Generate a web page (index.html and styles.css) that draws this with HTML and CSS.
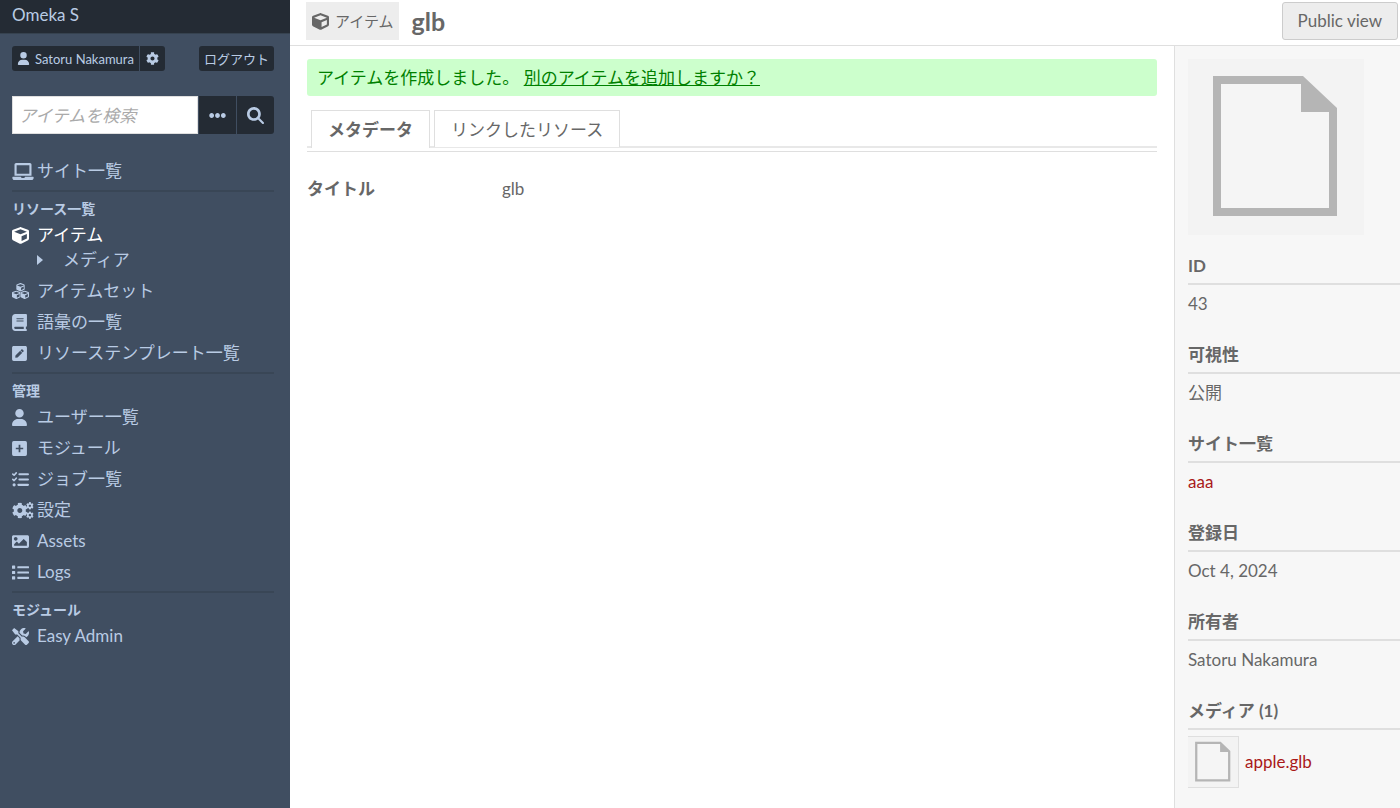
FILE: index.html
```html
<!DOCTYPE html>
<html lang="ja">
<head>
    <meta charset="UTF-8">
    <meta name="viewport" content="width=device-width, initial-scale=1.0">
    <title>glb · アイテム · Omeka S</title>
    <link rel="stylesheet" href="styles.css">
</head>
<body>

<!-- shared icons -->
<svg class="sprite" aria-hidden="true">
    <symbol id="i-user" viewBox="0 0 448 512"><path d="M224 256A128 128 0 1 0 224 0a128 128 0 1 0 0 256zm-45.7 48C79.8 304 0 383.8 0 482.3C0 498.7 13.3 512 29.7 512H418.3c16.4 0 29.7-13.3 29.7-29.7C448 383.8 368.2 304 269.7 304H178.3z"/></symbol>
    <symbol id="i-cog" viewBox="0 0 512 512"><path d="M487.4 315.7l-42.6-24.6c4.3-23.2 4.3-47 0-70.2l42.6-24.6c4.9-2.8 7.1-8.6 5.5-14-11.1-35.6-30-67.8-54.7-94.6-3.8-4.1-10-5.1-14.8-2.3L380.8 110c-17.9-15.4-38.5-27.3-60.8-35.1V25.8c0-5.6-3.9-10.5-9.4-11.7-36.7-8.2-74.3-7.8-109.2 0-5.5 1.2-9.4 6.1-9.4 11.7V75c-22.2 7.9-42.8 19.8-60.8 35.1L88.7 85.5c-4.9-2.8-11-1.9-14.8 2.3-24.7 26.7-43.6 58.9-54.7 94.6-1.7 5.4.6 11.2 5.5 14L67.3 221c-4.3 23.2-4.3 47 0 70.2l-42.6 24.6c-4.9 2.8-7.1 8.6-5.5 14 11.1 35.6 30 67.8 54.7 94.6 3.8 4.1 10 5.1 14.8 2.3l42.6-24.6c17.9 15.4 38.5 27.3 60.8 35.1v49.2c0 5.6 3.9 10.5 9.4 11.7 36.7 8.2 74.3 7.8 109.2 0 5.5-1.2 9.4-6.1 9.4-11.7v-49.2c22.2-7.9 42.8-19.8 60.8-35.1l42.6 24.6c4.9 2.8 11 1.9 14.8-2.3 24.7-26.7 43.6-58.9 54.7-94.6 1.5-5.5-.7-11.3-5.6-14.1zM256 336c-44.1 0-80-35.9-80-80s35.9-80 80-80 80 35.9 80 80-35.9 80-80 80z"/></symbol>
    <symbol id="i-cube" viewBox="0 0 512 512"><path d="M239.1 6.3l-208 78c-18.7 7-31.1 25-31.1 45v225.1c0 18.2 10.3 34.8 26.5 42.9l208 104c13.5 6.8 29.4 6.8 42.9 0l208-104c16.3-8.1 26.5-24.8 26.5-42.9V129.3c0-20-12.4-37.9-31.1-44.9l-208-78C262 2.2 250 2.2 239.1 6.3zM256 68.4l192 72v1.1l-192 78-192-78v-1.1l192-72zm32 356V275.5l160-65v133.9l-160 80z"/></symbol>
    <symbol id="i-page" viewBox="0 0 176 176"><path fill="#f5f5f5" d="M29 21h85l31 31v101H29z"/><path fill="#b5b5b5" fill-rule="evenodd" d="M25 17h90l34 32v108H25zM33 25v124h108V53h-28V25z"/></symbol>
</svg>

<header class="sidebar">
    <div class="site-title"><a href="#">Omeka S</a></div>

    <div class="user">
        <div class="user-links">
            <a href="#"><svg class="icon-user"><use href="#i-user"/></svg>Satoru Nakamura</a>
            <a href="#" aria-label="ユーザー設定"><svg class="icon-cog"><use href="#i-cog"/></svg></a>
        </div>
        <a class="logout" href="#">ログアウト</a>
    </div>

    <form class="search" onsubmit="return false">
        <input type="text" aria-label="アイテムを検索" placeholder="アイテムを検索">
        <button type="button" aria-label="検索オプション"><svg class="icon" viewBox="0 0 512 512"><path d="M328 256c0 39.8-32.2 72-72 72s-72-32.2-72-72 32.2-72 72-72 72 32.2 72 72zm104-72c-39.8 0-72 32.2-72 72s32.2 72 72 72 72-32.2 72-72-32.2-72-72-72zm-352 0c-39.8 0-72 32.2-72 72s32.2 72 72 72 72-32.2 72-72-32.2-72-72-72z"/></svg></button>
        <button type="submit" aria-label="検索"><svg class="icon" viewBox="0 0 512 512"><path d="M416 208c0 45.9-14.9 88.3-40 122.7L502.6 457.4c12.5 12.5 12.5 32.8 0 45.3s-32.8 12.5-45.3 0L330.7 376c-34.4 25.2-76.8 40-122.7 40C93.1 416 0 322.9 0 208S93.1 0 208 0S416 93.1 416 208zM208 336a128 128 0 1 0 0-256 128 128 0 1 0 0 256z"/></svg></button>
    </form>

    <nav>
        <ul>
            <li><a href="#"><svg class="icon wide" viewBox="0 0 640 512"><path d="M624 416H381.54c-.74 19.81-14.71 32-32.74 32H288c-18.69 0-33.02-17.47-32.77-32H16c-8.8 0-16 7.2-16 16v16c0 35.2 28.8 64 64 64h512c35.2 0 64-28.8 64-64v-16c0-8.8-7.2-16-16-16zM576 48c0-26.4-21.6-48-48-48H112C85.6 0 64 21.6 64 48v336h512V48zm-64 272H128V64h384v256z"/></svg>サイト一覧</a></li>
        </ul>

        <h4>リソース一覧</h4>
        <ul>
            <li>
                <a class="active" href="#"><svg class="icon"><use href="#i-cube"/></svg>アイテム</a>
                <ul class="sub">
                    <li><a href="#"><svg class="caret" viewBox="0 0 6 10"><path d="M0 0l6 5-6 5z"/></svg>メディア</a></li>
                </ul>
            </li>
            <li><a href="#"><svg class="icon" viewBox="0 0 512 512"><use href="#i-cube" x="126" y="0" width="260" height="260"/><use href="#i-cube" x="0" y="228" width="260" height="260"/><use href="#i-cube" x="252" y="228" width="260" height="260"/></svg>アイテムセット</a></li>
            <li><a href="#"><svg class="icon narrow" viewBox="0 0 448 512"><path fill-rule="evenodd" d="M96 0C43 0 0 43 0 96V416c0 53 43 96 96 96H416c17.7 0 32-14.3 32-32s-14.3-32-32-32V384c17.7 0 32-14.3 32-32V32c0-17.7-14.3-32-32-32H96zm0 384H352v64H96c-17.7 0-32-14.3-32-32s14.3-32 32-32zm32-240c0-8.8 7.2-16 16-16H336c8.8 0 16 7.2 16 16s-7.2 16-16 16H144c-8.8 0-16-7.2-16-16zm16 48H336c8.8 0 16 7.2 16 16s-7.2 16-16 16H144c-8.8 0-16-7.2-16-16s7.2-16 16-16z"/></svg>語彙の一覧</a></li>
            <li><a href="#"><svg class="icon narrow" viewBox="0 0 448 512"><path d="M400 480H48c-26.5 0-48-21.5-48-48V80c0-26.5 21.5-48 48-48h352c26.5 0 48 21.5 48 48v352c0 26.5-21.5 48-48 48zM238.1 177.9L102.4 313.6l-6.3 57.1c-.8 7.6 5.6 14.1 13.3 13.3l57.1-6.3L302.2 242c2.3-2.3 2.3-6.1 0-8.5L246.7 178c-2.5-2.4-6.3-2.4-8.6-.1zM345 165.1L314.9 135c-9.4-9.4-24.6-9.4-33.9 0l-23.1 23.1c-2.3 2.3-2.3 6.1 0 8.5l55.5 55.5c2.3 2.3 6.1 2.3 8.5 0L345 199c9.3-9.3 9.3-24.5 0-33.9z"/></svg>リソーステンプレート一覧</a></li>
        </ul>

        <h4>管理</h4>
        <ul>
            <li><a href="#"><svg class="icon narrow"><use href="#i-user"/></svg>ユーザー一覧</a></li>
            <li><a href="#"><svg class="icon narrow" viewBox="0 0 448 512"><path fill-rule="evenodd" d="M48 32h352a48 48 0 0 1 48 48v352a48 48 0 0 1-48 48H48a48 48 0 0 1-48-48V80a48 48 0 0 1 48-48zM198 144v86h-86v52h86v86h52v-86h86v-52h-86v-86z"/></svg>モジュール</a></li>
            <li><a href="#"><svg class="icon" viewBox="0 0 512 512"><path fill="none" stroke="currentColor" stroke-width="48" stroke-linecap="round" stroke-linejoin="round" d="M24 92l40 36 64-72M24 252l40 36 64-72"/><path d="M64 368a48 48 0 1 0 0 96 48 48 0 1 0 0-96zM224 64h256a32 32 0 0 1 0 64H224a32 32 0 0 1 0-64zm0 160h256a32 32 0 0 1 0 64H224a32 32 0 0 1 0-64zm-32 160h288a32 32 0 0 1 0 64H192a32 32 0 0 1 0-64z"/></svg>ジョブ一覧</a></li>
            <li><a href="#"><svg class="icon wide" viewBox="0 0 640 512"><use href="#i-cog" x="-16" y="16" width="480" height="480"/><use href="#i-cog" x="412" y="0" width="232" height="232"/><use href="#i-cog" x="412" y="280" width="232" height="232"/></svg>設定</a></li>
            <li><a href="#"><svg class="icon" viewBox="0 0 512 512"><path d="M464 448H48c-26.51 0-48-21.49-48-48V112c0-26.51 21.49-48 48-48h416c26.51 0 48 21.49 48 48v288c0 26.51-21.49 48-48 48zM112 120c-30.928 0-56 25.072-56 56s25.072 56 56 56 56-25.072 56-56-25.072-56-56-56zM64 384h384V272l-87.515-87.515c-4.686-4.686-12.284-4.686-16.971 0L208 320l-55.515-55.515c-4.686-4.686-12.284-4.686-16.971 0L64 336v48z"/></svg>Assets</a></li>
            <li><a href="#"><svg class="icon" viewBox="0 0 512 512"><path d="M80 368H16a16 16 0 0 0-16 16v64a16 16 0 0 0 16 16h64a16 16 0 0 0 16-16v-64a16 16 0 0 0-16-16zm0-320H16A16 16 0 0 0 0 64v64a16 16 0 0 0 16 16h64a16 16 0 0 0 16-16V64a16 16 0 0 0-16-16zm0 160H16a16 16 0 0 0-16 16v64a16 16 0 0 0 16 16h64a16 16 0 0 0 16-16v-64a16 16 0 0 0-16-16zm416 176H176a16 16 0 0 0-16 16v32a16 16 0 0 0 16 16h320a16 16 0 0 0 16-16v-32a16 16 0 0 0-16-16zm0-320H176a16 16 0 0 0-16 16v32a16 16 0 0 0 16 16h320a16 16 0 0 0 16-16V80a16 16 0 0 0-16-16zm0 160H176a16 16 0 0 0-16 16v32a16 16 0 0 0 16 16h320a16 16 0 0 0 16-16v-32a16 16 0 0 0-16-16z"/></svg>Logs</a></li>
        </ul>

        <h4>モジュール</h4>
        <ul>
            <li><a href="#"><svg class="icon" viewBox="0 0 512 512"><path d="M501.1 395.7L384 278.6c-23.1-23.1-57.6-27.6-85.4-13.9L192 158.1V96L64 0 0 64l96 128h62.1l106.6 106.6c-13.6 27.8-9.2 62.3 13.9 85.4l117.1 117.1c14.6 14.6 38.2 14.6 52.7 0l52.7-52.7c14.5-14.6 14.5-38.2 0-52.7zM331.7 225c28.3 0 54.9 11 74.9 31l19.4 19.4c15.8-6.9 30.8-16.5 43.8-29.5 37.1-37.1 49.7-89.3 37.9-136.7-2.2-9-13.5-12.1-20.1-5.5l-74.4 74.4-67.9-11.3L334 98.9l74.4-74.4c6.6-6.6 3.4-17.9-5.7-20.2-47.4-11.7-99.6.9-136.6 37.9-28.5 28.5-41.9 66.1-41.2 103.6l82.1 82.1c8.1-1.9 16.5-2.9 24.7-2.9zm-103.9 82l-56.7-56.7L18.7 402.8c-25 25-25 65.5 0 90.5s65.5 25 90.5 0l123.6-123.6c-7.6-19.9-9.9-41.6-5-62.7zM64 472c-13.2 0-24-10.8-24-24 0-13.3 10.7-24 24-24s24 10.7 24 24c0 13.2-10.7 24-24 24z"/></svg>Easy Admin</a></li>
        </ul>
    </nav>
</header>

<div class="page">
    <div class="page-header">
        <span class="section-label"><svg class="icon"><use href="#i-cube"/></svg>アイテム</span>
        <h1>glb</h1>
        <a class="button" href="#">Public view</a>
    </div>

    <div class="columns">
        <main>
            <div class="success">アイテムを作成しました。 <a href="#">別のアイテムを追加しますか？</a></div>
            <div class="tabs">
                <a class="active" href="#">メタデータ</a>
                <a href="#">リンクしたリソース</a>
            </div>
            <dl class="property">
                <dt>タイトル</dt>
                <dd>glb</dd>
            </dl>
        </main>

        <aside>
            <svg class="thumbnail"><use href="#i-page"/></svg>
            <section>
                <h4>ID</h4>
                <div>43</div>
            </section>
            <section>
                <h4>可視性</h4>
                <div>公開</div>
            </section>
            <section>
                <h4>サイト一覧</h4>
                <div><a href="#">aaa</a></div>
            </section>
            <section>
                <h4>登録日</h4>
                <div>Oct 4, 2024</div>
            </section>
            <section>
                <h4>所有者</h4>
                <div>Satoru Nakamura</div>
            </section>
            <section>
                <h4>メディア (1)</h4>
                <a class="media" href="#"><svg><use href="#i-page"/></svg>apple.glb</a>
            </section>
        </aside>
    </div>
</div>

</body>
</html>
```
FILE: styles.css
```css
* {
    box-sizing: border-box;
}
body {
    margin: 0;
    min-height: 100vh;
    display: flex;
    font-family: Lato, "Noto Sans CJK JP", sans-serif;
    font-size: 17px;
    line-height: 24px;
    color: #676767;
    background: #fff;
}
a {
    color: #a91919;
    text-decoration: none;
}
ul {
    list-style: none;
    margin: 0;
    padding: 0;
}
h1, h4, dl, dd {
    margin: 0;
}
svg {
    display: block;
    flex: none;
    fill: currentColor;
}
.sprite {
    position: absolute;
    width: 0;
    height: 0;
}
.icon {
    width: 17px;
    height: 17px;
}
.icon.narrow {
    width: 15px;
}
.icon.wide {
    width: 22px;
}

/* left sidebar */
.sidebar {
    flex: none;
    width: 290px;
    background: #404e61;
    color: #b9cbe4;
}
.sidebar a {
    color: #b9cbe4;
}
.site-title {
    padding: 3px 12px 6px;
    background: #242b34;
    border-bottom: 1px solid #36424f;
}
.user {
    display: flex;
    justify-content: space-between;
    padding: 12px 16px 0 12px;
    font-size: 13px;
}
.user-links {
    display: flex;
    gap: 1px;
}
.user a {
    display: flex;
    align-items: center;
    height: 25px;
    padding: 0 5px;
    background: #242b34;
    border-radius: 3px;
}
.user-links a:first-child {
    gap: 5px;
    border-radius: 3px 0 0 3px;
}
.user-links a:last-child {
    padding: 0 6px;
    border-radius: 0 3px 3px 0;
}
.icon-user,
.icon-cog {
    width: 13px;
    height: 13px;
}
.search {
    display: flex;
    gap: 1px;
    margin: 25px 16px 25px 12px;
}
.search input {
    flex: 1;
    min-width: 0;
    height: 38px;
    padding: 0 6px;
    border: 1px solid #dfdfdf;
    border-radius: 0;
    background: #fff;
    color: #676767;
    font: inherit;
}
.search input::placeholder {
    color: #aaa;
    font-style: italic;
}
.search button {
    display: flex;
    align-items: center;
    justify-content: center;
    width: 37px;
    height: 38px;
    padding: 0;
    border: 0;
    background: #242b34;
    color: #b9cbe4;
    cursor: pointer;
}
.search button:last-child {
    border-radius: 0 3px 3px 0;
}
nav {
    padding: 0 16px 16px 12px;
}
nav ul a {
    display: flex;
    align-items: center;
    height: 24px;
    margin-bottom: 7px;
}
nav a .icon {
    margin-right: 8px;
}
nav a .narrow {
    margin-right: 10px;
}
nav a .wide {
    margin-right: 3px;
}
.sidebar a.active {
    margin-bottom: 1px;
    color: #fff;
}
nav .sub a {
    padding-left: 25px;
}
.caret {
    width: 6px;
    height: 10px;
    margin-right: 20px;
}
nav h4 {
    padding: 5px 0 2px;
    border-top: 2px solid #394656;
    font-size: 14px;
}

/* page header */
.page {
    flex: 1;
    min-width: 0;
    display: flex;
    flex-direction: column;
}
.page-header {
    display: flex;
    align-items: center;
    padding: 2px 2px 5px 16px;
    border-bottom: 1px solid #dfdfdf;
}
.section-label {
    display: flex;
    align-items: center;
    gap: 6px;
    height: 38px;
    padding: 0 5px 0 6px;
    background: #ededed;
    font-size: 15px;
}
.page-header h1 {
    margin-left: 13px;
    font-size: 25px;
}
.button {
    height: 38px;
    margin-left: auto;
    padding: 6px 15px;
    background: #ededed;
    border: 1px solid #ccc;
    border-radius: 3px;
    color: #676767;
}
.columns {
    flex: 1;
    display: flex;
}
main {
    flex: 1;
    min-width: 0;
    padding: 13px 17px;
}
.success {
    padding: 7px 10px 6px;
    background: #cfc;
    border-radius: 3px;
    color: green;
}
.success a {
    color: green;
    text-decoration: underline;
}
.tabs {
    display: flex;
    gap: 4px;
    height: 42px;
    margin: 14px 0 25px;
    padding-left: 4px;
    border-bottom: 1px solid #dfdfdf;
    background: linear-gradient(#e8e8e8, #e8e8e8) 0 36px / 100% 2px no-repeat;
}
.tabs a {
    height: 37px;
    padding: 7px 16px;
    border: 1px solid #dfdfdf;
    border-bottom: 0;
    background: #fff;
    color: #676767;
}
.tabs a.active {
    height: 38px;
    font-weight: bold;
}
.property {
    display: flex;
}
.property dt {
    width: 195px;
    font-weight: bold;
}

/* details sidebar */
aside {
    flex: none;
    width: 226px;
    padding: 13px 0 21px 13px;
    background: #f7f7f7;
    border-left: 1px solid #dfdfdf;
}
.thumbnail {
    width: 176px;
    height: 176px;
    margin-bottom: 19px;
    background: #f3f3f3;
}
aside section {
    margin-bottom: 27px;
}
aside section:last-child {
    margin-bottom: 0;
}
aside h4 {
    margin-bottom: 6px;
    padding-bottom: 5px;
    border-bottom: 2px solid #dfdfdf;
}
aside section div {
    padding-top: 1px;
}
.media {
    display: flex;
    align-items: center;
    gap: 6px;
}
.media svg {
    width: 51px;
    height: 52px;
    border: 1px solid #dfdfdf;
    border-left: 0;
    background: #f3f3f3;
}
```
